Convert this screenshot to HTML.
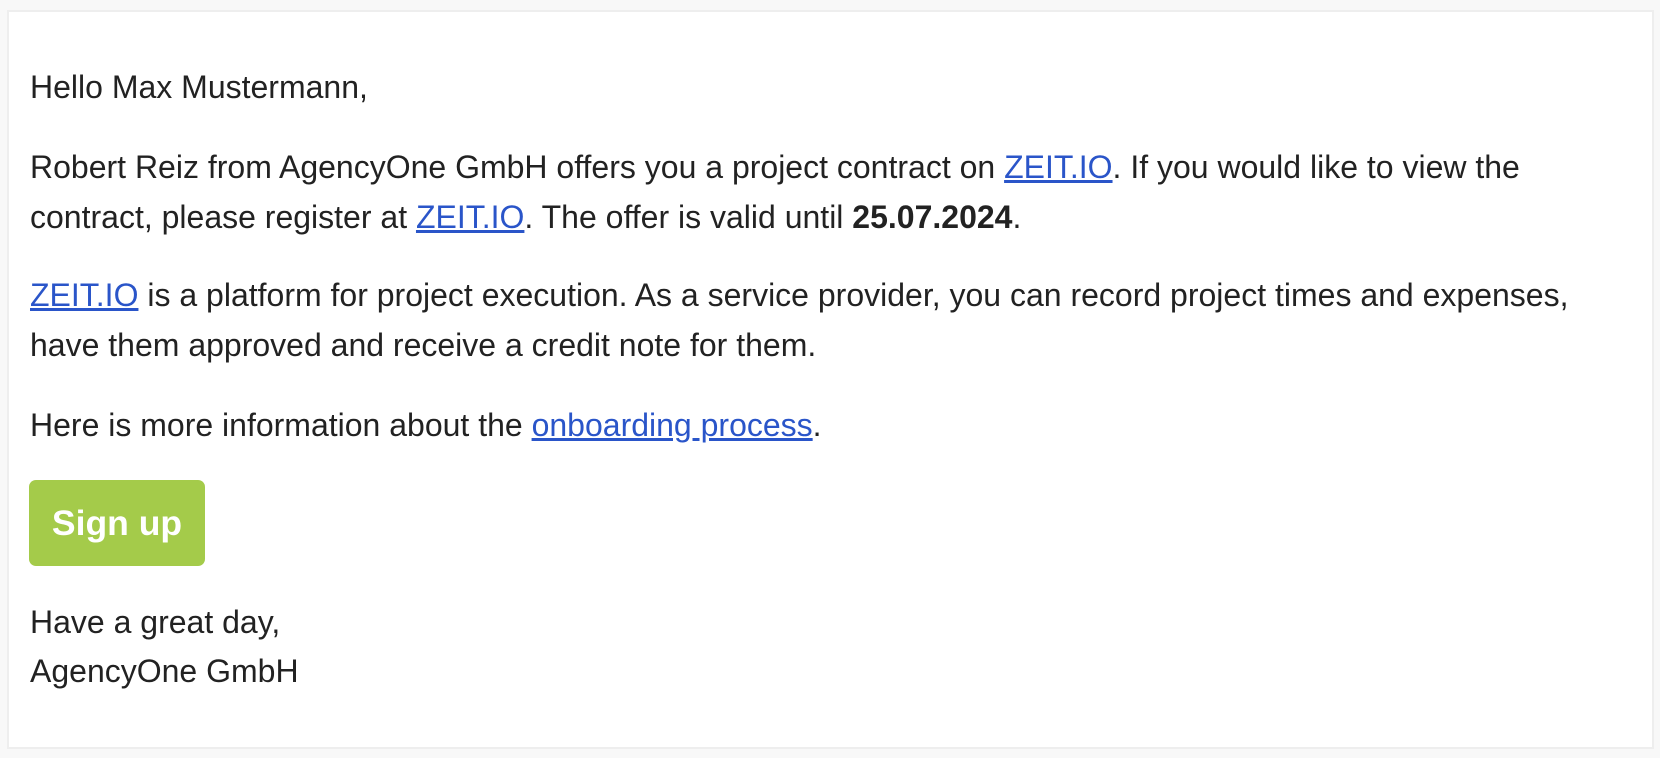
<!DOCTYPE html>
<html><head><meta charset="utf-8"><style>
html,body{margin:0;padding:0;background:#f8f8f8;width:1660px;height:758px;overflow:hidden}
.card{position:absolute;left:7px;top:10px;width:1643px;height:735px;background:#fff;border:2px solid #eeeeee}
.t{position:absolute;left:30px;font-family:"Liberation Sans",Arial,sans-serif;font-size:32px;line-height:50px;color:#222;white-space:nowrap}
a{color:#2a55c9;text-decoration:underline}
.btn{position:absolute;left:29px;top:480px;width:176px;height:86px;background:#a4cb4a;border-radius:7px;color:#fff;font-family:"Liberation Sans",Arial,sans-serif;font-weight:bold;font-size:35.5px;line-height:86px;text-align:center}
</style></head><body>
<div class="card"></div>
<div class="t" style="top:62px">Hello Max Mustermann,</div>
<div class="t" style="top:142px">Robert Reiz from AgencyOne GmbH offers you a project contract on <a>ZEIT.IO</a>. If you would like to view the<br>contract, please register at <a>ZEIT.IO</a>. The offer is valid until <b>25.07.2024</b>.</div>
<div class="t" style="top:270px"><a>ZEIT.IO</a> is a platform for project execution. As a service provider, you can record project times and expenses,<br>have them approved and receive a credit note for them.</div>
<div class="t" style="top:400px">Here is more information about the <a>onboarding process</a>.</div>
<div class="btn">Sign up</div>
<div class="t" style="top:598px;line-height:49px">Have a great day,<br>AgencyOne GmbH</div>
</body></html>
